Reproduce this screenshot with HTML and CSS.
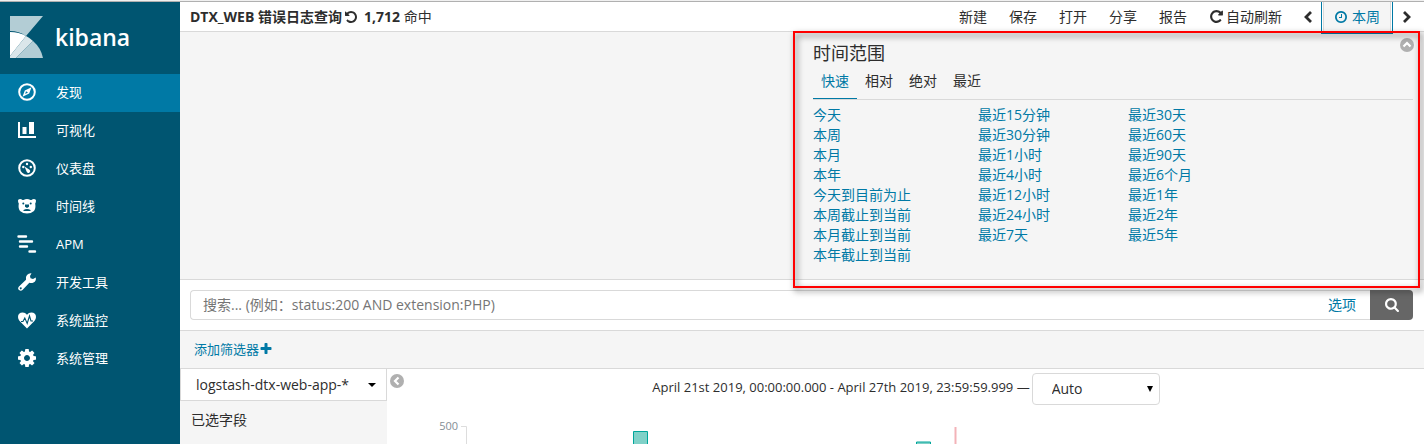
FILE: index.html
```html
<!DOCTYPE html>
<html lang="zh-CN">
<head>
<meta charset="utf-8">
<title>Kibana</title>
<link rel="stylesheet" href="styles.css">
</head>
<body>
<svg class="defs" aria-hidden="true">
  <symbol id="repeat" viewBox="0 0 1792 1792"><path d="M1664 256v448q0 26-19 45t-45 19h-448q-42 0-59-40-17-39 14-69l138-138q-148-137-349-137-104 0-198.500 40.500t-163.500 109.500-109.500 163.500-40.500 198.500 40.500 198.500 109.500 163.500 163.500 109.500 198.500 40.500q119 0 225-52t179-147q7-10 23-12 15 0 25 9l137 138q9 8 9.500 20.500t-7.500 22.500q-109 132-264 204.500t-327 72.500q-156 0-298-61t-245-164-164-245-61-298 61-298 164-245 245-164 298-61q147 0 284.500 55.500t244.500 156.500l130-129q29-31 70-14 39 17 39 59z"/></symbol>
</svg>
<div class="app">
  <nav class="sidebar">
    <a class="brand" href="#">
      <svg width="33" height="42" viewBox="0 0 33 42" aria-hidden="true">
        <path d="M0 0H33L16 20Q9 15 0 15z" fill="#b3cdd5"/>
        <path d="M0 16Q9 16 16 20L0 40z" fill="#fff"/>
        <path d="M16 20Q20 22 23 25L6 42H0V40z" fill="#dae6ea"/>
        <path d="M23 25Q31 32 33 42H6z" fill="#b3cdd5"/>
      </svg>
      <span class="brand-name">kibana</span>
    </a>
    <a class="nav-item active" href="#">
      <svg class="nav-icon" viewBox="0 0 18 18" aria-hidden="true"><circle cx="9" cy="9" r="7.800" fill="none" stroke="#fff" stroke-width="2"/><path fill-rule="evenodd" d="M13.500 4.300L11.200 10.500 4.500 13.700 6.800 7.400zM8 8.300L7.200 11 10 9.600z"/></svg>
      <span>发现</span></a>
    <a class="nav-item" href="#">
      <svg class="nav-icon" viewBox="0 0 18 18" aria-hidden="true"><path d="M0 1h2v14h16v2H0zM4.500 6h4v7h-4zM11 1h5v12h-5z"/></svg>
      <span>可视化</span></a>
    <a class="nav-item" href="#">
      <svg class="nav-icon" viewBox="0 0 18 18" aria-hidden="true"><circle cx="9" cy="9" r="7.800" fill="none" stroke="#fff" stroke-width="2"/><circle cx="5.300" cy="8" r="1.200"/><circle cx="9" cy="5" r="1.200"/><circle cx="12.800" cy="8" r="1.200"/><path d="M6.500 7.500l5 3.200a1.800 1.800 0 1 1-2.700 2.300z"/></svg>
      <span>仪表盘</span></a>
    <a class="nav-item" href="#">
      <svg class="nav-icon" viewBox="0 0 18 18" aria-hidden="true"><path d="M0 3.500Q0 2 2 2q1.500 0 2.500 1h1Q9 1 12.500 3h1q1-1 2.500-1 2 0 2 1.500 0 2-.8 3 .8 5-1.200 7.500Q13 16.500 9 16.500T2 14Q0 11.500.8 6.500 0 5.500 0 3.500z"/><g fill="#005571"><circle cx="5.300" cy="6.500" r="1"/><circle cx="12.700" cy="6.500" r="1"/><path d="M7 7.500h4v2.200L9 11 7 9.700zM5.500 13Q9 11 12.500 13v1h-7z"/></g></svg>
      <span>时间线</span></a>
    <a class="nav-item" href="#">
      <svg class="nav-icon" viewBox="0 0 18 18" aria-hidden="true"><g stroke="#fff" stroke-width="2.400" stroke-linecap="round"><path d="M.5 1.500H8M2 6.500h12M2 11.500h7M11.500 16.500h5.500"/></g></svg>
      <span>APM</span></a>
    <a class="nav-item" href="#">
      <svg class="nav-icon" viewBox="0 0 18 18" aria-hidden="true"><path fill-rule="evenodd" d="M13.500.3L12 3l.5 2.300 2.500.7 2.800-1.500Q18.500 8 15.500 9.500 13.500 10.500 11.300 9.700L4.500 17Q2.800 18.500 1 17T1 13.500L8 6.800Q7.300 4 9 2 10.800 0 13.500.3zM2.700 14.300a1 1 0 1 0 .1 0z"/></svg>
      <span>开发工具</span></a>
    <a class="nav-item" href="#">
      <svg class="nav-icon" viewBox="0 0 18 18" aria-hidden="true"><path d="M9 17.500L1.600 10Q0 8.200 0 6 0 1.500 4.800 1.500 7.200 1.500 9 3.700 10.800 1.500 13.200 1.500 18 1.500 18 6q0 2.200-1.600 4z"/><path d="M3 10.500h2L6.800 7l2.400 5.500L11.500 5l1.500 5h2" fill="none" stroke="#005571" stroke-width="1.100"/></svg>
      <span>系统监控</span></a>
    <a class="nav-item" href="#">
      <svg class="nav-icon" viewBox="128 128 1536 1536" aria-hidden="true"><path d="M1152 896q0-106-75-181t-181-75-181 75-75 181 75 181 181 75 181-75 75-181zm512-109v222q0 12-8 23t-20 13l-185 28q-19 54-39 91 35 50 107 138 10 12 10 25t-9 23q-27 37-99 108t-94 71q-12 0-26-9l-138-108q-44 23-91 38-16 136-29 186-7 28-36 28h-222q-14 0-24.500-8.500t-11.500-21.500l-28-184q-49-16-90-37l-141 107q-10 9-25 9-14 0-25-11-126-114-165-168-7-10-7-23 0-12 8-23 15-21 51-66.500t54-70.500q-27-50-41-99l-183-27q-13-2-21-12.500t-8-23.500v-222q0-12 8-23t19-13l186-28q14-46 39-92-40-57-107-138-10-12-10-24 0-10 9-23 26-36 98.500-107.500t94.500-71.500q13 0 26 10l138 107q44-23 91-38 16-136 29-186 7-28 36-28h222q14 0 24.500 8.500t11.500 21.500l28 184q49 16 90 37l142-107q9-9 24-9 13 0 25 10 129 119 165 170 7 8 7 22 0 12-8 23-15 21-51 66.500t-54 70.500q26 50 41 98l183 28q13 2 21 12.500t8 23.500z"/></svg>
      <span>系统管理</span></a>
  </nav>

  <main class="content">
    <header class="topbar">
      <div class="title">
        <strong>DTX_WEB 错误日志查询</strong>
        <button class="plain" aria-label="重置"><svg class="icon flip" width="14" height="14"><use href="#repeat"/></svg></button>
        <span class="hits"><strong>1,712</strong> 命中</span>
      </div>
      <div class="menu">
        <button class="menu-item">新建</button>
        <button class="menu-item">保存</button>
        <button class="menu-item">打开</button>
        <button class="menu-item">分享</button>
        <button class="menu-item">报告</button>
        <button class="menu-item refresh"><svg class="icon" width="15" height="15" aria-hidden="true"><use href="#repeat"/></svg>自动刷新</button>
        <button class="menu-item step" aria-label="上一段"><svg width="10" height="14" viewBox="0 0 10 14"><path d="M9 2L4 7l5 5" fill="none" stroke="#2d2d2d" stroke-width="2.800"/></svg></button>
        <button class="menu-item period"><svg class="icon" width="14" height="14" viewBox="0 0 1792 1792" aria-hidden="true"><path d="M1024 544v448q0 14-9 23t-23 9h-320q-14 0-23-9t-9-23v-64q0-14 9-23t23-9h224v-352q0-14 9-23t23-9h64q14 0 23 9t9 23zm416 352q0-148-73-273t-198-198-273-73-273 73-198 198-73 273 73 273 198 198 273 73 273-73 198-198 73-273zm224 0q0 209-103 385.500t-279.500 279.500-385.500 103-385.500-103-279.500-279.500-103-385.500 103-385.500 279.500-279.500 385.500-103 385.500 103 279.500 279.500 103 385.500z"/></svg>本周</button>
        <button class="menu-item step" aria-label="下一段"><svg width="10" height="14" viewBox="0 0 10 14"><path d="M2 2l5 5-5 5" fill="none" stroke="#2d2d2d" stroke-width="2.800"/></svg></button>
      </div>
    </header>

    <section class="dropdown">
      <div class="timepicker">
        <h2>时间范围</h2>
        <button class="plain close" aria-label="收起"><svg width="14" height="14" viewBox="0 0 14 14"><circle cx="7" cy="7" r="7" fill="#b0b0b0"/><path d="M3.500 8.500L7 5l3.500 3.500" fill="none" stroke="#fff" stroke-width="2.200"/></svg></button>
        <div class="tabs">
          <button class="tab selected">快速</button>
          <button class="tab">相对</button>
          <button class="tab">绝对</button>
          <button class="tab">最近</button>
        </div>
        <div class="ranges">
          <ul>
            <li><a href="#">今天</a></li>
            <li><a href="#">本周</a></li>
            <li><a href="#">本月</a></li>
            <li><a href="#">本年</a></li>
            <li><a href="#">今天到目前为止</a></li>
            <li><a href="#">本周截止到当前</a></li>
            <li><a href="#">本月截止到当前</a></li>
            <li><a href="#">本年截止到当前</a></li>
          </ul>
          <ul>
            <li><a href="#">最近15分钟</a></li>
            <li><a href="#">最近30分钟</a></li>
            <li><a href="#">最近1小时</a></li>
            <li><a href="#">最近4小时</a></li>
            <li><a href="#">最近12小时</a></li>
            <li><a href="#">最近24小时</a></li>
            <li><a href="#">最近7天</a></li>
          </ul>
          <ul>
            <li><a href="#">最近30天</a></li>
            <li><a href="#">最近60天</a></li>
            <li><a href="#">最近90天</a></li>
            <li><a href="#">最近6个月</a></li>
            <li><a href="#">最近1年</a></li>
            <li><a href="#">最近2年</a></li>
            <li><a href="#">最近5年</a></li>
          </ul>
        </div>
        <div class="highlight"></div>
      </div>
    </section>

    <form class="search">
      <input class="query" type="text" aria-label="搜索" placeholder="搜索... (例如：status:200 AND extension:PHP)">
      <a class="options" href="#">选项</a>
      <button class="submit" type="button" aria-label="搜索"><svg width="14" height="14" viewBox="64 128 1664 1664"><path d="M1216 832q0-185-131.500-316.500t-316.500-131.500-316.500 131.500-131.500 316.500 131.500 316.500 316.500 131.500 316.500-131.500 131.500-316.500zm512 832q0 52-38 90t-90 38q-54 0-90-38l-343-342q-179 124-399 124-143 0-273.500-55.500t-225-150-150-225-55.500-273.500 55.500-273.500 150-225 225-150 273.500-55.500 273.500 55.500 225 150 150 225 55.500 273.500q0 220-124 399l343 343q37 37 37 90z"/></svg></button>
    </form>

    <div class="filters">
      <a class="add-filter" href="#">添加筛选器<svg class="icon" width="14" height="14" viewBox="0 0 1792 1792" aria-hidden="true"><path d="M1600 736v192q0 40-28 68t-68 28h-416v416q0 40-28 68t-68 28h-192q-40 0-68-28t-28-68v-416h-416q-40 0-68-28t-28-68v-192q0-40 28-68t68-28h416v-416q0-40 28-68t68-28h192q40 0 68 28t28 68v416h416q40 0 68 28t28 68z"/></svg></a>
    </div>

    <div class="discover">
      <aside class="fields">
        <button class="pattern">logstash-dtx-web-app-*<svg width="8" height="4" viewBox="0 0 8 4" aria-hidden="true"><path d="M0 0h8L4 4z"/></svg></button>
        <h3>已选字段</h3>
      </aside>
      <section class="results">
        <div class="results-head">
          <button class="plain" aria-label="折叠"><svg width="14" height="14" viewBox="0 0 14 14"><circle cx="7" cy="7" r="7" fill="#b0b0b0"/><path d="M8.500 3.500L5 7l3.500 3.500" fill="none" stroke="#fff" stroke-width="2.200"/></svg></button>
          <div class="interval">
            <label for="interval">April 21st 2019, 00:00:00.000 - April 27th 2019, 23:59:59.999 —</label>
            <div class="select">
              <select id="interval"><option>Auto</option></select>
              <svg width="6" height="6" viewBox="0 0 6 6" aria-hidden="true"><path d="M0 0h6L3 6z"/></svg>
            </div>
          </div>
        </div>
        <svg class="chart" width="1030" height="40" viewBox="0 0 1030 40" role="img" aria-label="命中数">
          <text x="71" y="25" text-anchor="end">500</text>
          <path d="M74 21.500h5.500V40" fill="none" stroke="#ddd"/>
          <g fill="#80d1c8" stroke="#00a69b"><path d="M246.500 41V26.500h14V41M529.500 41v-4h14v4"/></g>
          <path d="M568.500 22v18" stroke="#f3b3b8" stroke-width="2"/>
        </svg>
      </section>
    </div>
  </main>
</div>
</body>
</html>
```
FILE: styles.css
```css
* { box-sizing: border-box; }

body {
  margin: 0;
  height: 100vh;
  overflow: hidden;
  border-top: 1px solid #f0f0f0;
  background: #fff;
  color: #2d2d2d;
  font: 14px/20px "Open Sans", "Noto Sans CJK SC", sans-serif;
}

button, input, select {
  margin: 0;
  padding: 0;
  border: 0;
  background: none;
  color: inherit;
  font: inherit;
}

a { color: #0079a5; text-decoration: none; }
ul { margin: 0; padding: 0; list-style: none; }
h2, h3 { margin: 0; font-weight: 400; }
svg { display: block; flex: none; }
.icon { fill: currentColor; }
.flip { transform: scaleX(-1); }
.plain { display: flex; }
.defs { display: none; }

.app {
  display: flex;
  height: 100%;
  border-top: 1px solid #b0b0b0;
}

.sidebar { flex: 0 0 180px; background: #005571; }

.brand {
  display: flex;
  height: 72px;
  padding: 14px 10px 0;
  gap: 12px;
  color: #fff;
}

.brand-name { font-size: 23px; line-height: 42px; font-weight: 600; }

.nav-item {
  display: flex;
  align-items: center;
  height: 38px;
  padding: 0 18px 3px;
  gap: 20px;
  color: #fff;
  font-size: 13px;
}

.nav-item.active { background: #0079a5; }
.nav-icon { width: 18px; height: 18px; fill: #fff; overflow: visible; }

.content { flex: 1; min-width: 0; display: flex; flex-direction: column; }

.topbar {
  display: flex;
  justify-content: space-between;
  height: 30px;
  border-bottom: 1px solid #d9d9d9;
}

.title { display: flex; align-items: center; gap: 2px; padding-left: 10px; }
.hits { padding-left: 4px; }
.menu { display: flex; padding-right: 3px; }
.menu-item { display: flex; align-items: center; padding: 0 11px; }
.refresh { gap: 2px; }
.step { padding: 0 9px; }

.period {
  position: relative;
  z-index: 1;
  gap: 4px;
  height: 32px;
  padding: 0 12px;
  border: 1px solid #0079a5;
  border-top: 0;
  border-bottom-width: 2px;
  background: #f5f5f5;
  color: #0079a5;
  box-shadow: inset 1px 0 #fff, inset -1px 0 #fff, inset 2px 0 #d9d9d9, inset -2px 0 #d9d9d9;
}

.dropdown {
  padding: 11px 11px 14px;
  border-bottom: 1px solid #d9d9d9;
  background: #f5f5f5;
}

.timepicker { position: relative; max-width: 600px; margin-left: auto; }
.timepicker h2 { font-size: 18px; line-height: 20px; }
.close { position: absolute; top: -5px; right: -1px; }

.tabs { display: flex; margin-top: 4px; border-bottom: 1px solid #d9d9d9; }
.tab { height: 32px; padding: 0 8px 4px; border-bottom: 1px solid transparent; }
.tab.selected { border-color: #0079a5; color: #0079a5; }

.ranges { display: grid; grid-template-columns: 165px 150px 1fr; padding-top: 5px; }

.highlight {
  position: absolute;
  z-index: 2;
  top: -12px;
  right: -7px;
  bottom: -23px;
  left: -20px;
  border: 2px solid #f00;
  filter: drop-shadow(2px 3px 3px rgba(0, 0, 0, 0.6));
  pointer-events: none;
}

.search {
  display: flex;
  padding: 10px 11px 10px 10px;
  border-bottom: 1px solid #d9d9d9;
  background: #fff;
}

.query {
  flex: 1;
  min-width: 0;
  height: 30px;
  padding: 0 12px 2px;
  border: 1px solid #d9d9d9;
  border-right: 0;
  border-radius: 4px 0 0 4px;
}

.query::placeholder { color: #757575; opacity: 1; }

.options {
  padding: 4px 14px;
  border: solid #d9d9d9;
  border-width: 1px 0;
}

.submit {
  display: flex;
  align-items: center;
  justify-content: center;
  width: 43px;
  border-radius: 0 4px 4px 0;
  background: #666;
  fill: #fff;
}

.filters {
  padding: 8px 14px 9px;
  border-bottom: 1px solid #d9d9d9;
  background: #f5f5f5;
  font-size: 13px;
}

.add-filter { display: inline-flex; align-items: center; }

.discover { display: flex; flex: 1; }
.fields { flex: 0 0 207px; background: #f5f5f5; }

.pattern {
  display: flex;
  align-items: center;
  justify-content: space-between;
  width: 100%;
  height: 32px;
  padding: 0 10px 0 15px;
  border: 1px solid #d9d9d9;
  border-top: 0;
  background: #fff;
}

.fields h3 { padding: 9px 11px; font-size: 14px; line-height: 20px; }

.results { flex: 1; min-width: 0; overflow: hidden; }
.results-head { display: flex; padding: 4px 16px 0 3px; }
.results-head > .plain { padding-top: 1px; align-self: flex-start; }
.interval { display: flex; flex: 1; justify-content: center; gap: 2px; font-size: 13px; }
.interval label { padding-top: 4px; }

.select { position: relative; width: 128px; font-size: 14px; }
.select select {
  width: 100%;
  height: 32px;
  padding: 0 19px;
  border: 1px solid #d9d9d9;
  border-radius: 4px;
  appearance: none;
  background: #fff;
}
.select svg { position: absolute; top: 13px; right: 7px; pointer-events: none; }

.chart { font-size: 11px; }
.chart text { fill: #848e96; }
```
